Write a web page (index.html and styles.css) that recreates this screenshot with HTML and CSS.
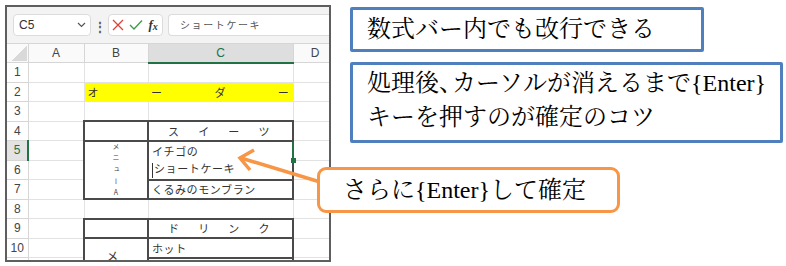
FILE: index.html
```html
<!DOCTYPE html>
<html>
  <head>
    <meta charset="UTF-8">
    <title>数式バー内の改行</title>
    <link rel="stylesheet" href="styles.css">
  </head>
  <body>
  <div class="page">
    <div class="sheet">
      <div class="fbar">
        <div class="namebox">
          <span>C5</span>
          <svg width="9" height="6" viewBox="0 0 9 6"><path d="M1 1 L4.5 4.5 L8 1" fill="none" stroke="#555" stroke-width="1.2"/></svg>
        </div>
        <div class="dots">⋮</div>
        <div class="fbtns">
          <span class="fbtn"><svg width="12" height="12" viewBox="0 0 12 12"><path d="M1 1 L11 11 M11 1 L1 11" stroke="#e0403a" stroke-width="1.3"/></svg></span>
          <span class="fbtn"><svg width="14" height="12" viewBox="0 0 14 12"><path d="M1 6 L5 10 L13 1.5" fill="none" stroke="#3d9a4d" stroke-width="1.3"/></svg></span>
          <span class="fbtn fx"><i>f</i><i class="x">x</i></span>
        </div>
        <div class="finput">ショートケーキ</div>
      </div>
      <table class="grid">
        <colgroup>
          <col class="c-hd"><col class="c-a"><col class="c-b"><col class="c-c"><col class="c-d">
        </colgroup>
        <tr class="hrow">
          <th class="corner"></th><th>A</th><th>B</th><th class="sel">C</th><th>D</th>
        </tr>
        <tr><th class="rh">1</th><td></td><td></td><td></td><td></td></tr>
        <tr><th class="rh">2</th><td></td>
          <td colspan="2" class="yellow"><div class="spread wide"><span>オ</span><span>ー</span><span>ダ</span><span>ー</span></div></td>
          <td></td></tr>
        <tr><th class="rh">3</th><td></td><td></td><td></td><td></td></tr>
        <tr><th class="rh">4</th><td></td><td class="bx"></td>
          <td class="bx"><div class="spread"><span>ス</span><span>イ</span><span>ー</span><span>ツ</span></div></td>
          <td></td></tr>
        <tr><th class="rh act">5</th><td></td>
          <td class="bx" rowspan="3"><div class="vtext"><span>メ</span><span>ニ</span><span>ュ</span><span>ー</span><span>A</span></div></td>
          <td class="edit">イチゴの<span class="handle"></span></td>
          <td></td></tr>
        <tr><th class="rh">6</th><td></td><td class="bx cont"><span class="caret"></span>ショートケーキ</td><td></td></tr>
        <tr><th class="rh">7</th><td></td><td class="bx">くるみのモンブラン</td><td></td></tr>
        <tr><th class="rh">8</th><td></td><td></td><td></td><td></td></tr>
        <tr><th class="rh">9</th><td></td><td class="bx"></td>
          <td class="bx"><div class="spread"><span>ド</span><span>リ</span><span>ン</span><span>ク</span></div></td>
          <td></td></tr>
        <tr><th class="rh">10</th><td></td>
          <td class="bx low" rowspan="2">メ</td>
          <td class="bx">ホット</td>
          <td></td></tr>
        <tr><th class="rh">11</th><td></td><td class="bx"></td><td></td></tr>
      </table>
    </div>

    <div class="notes">
      <div class="note note-one">数式バー内でも改行できる</div>
      <div class="note note-two">処理後<span class="half">、</span>カーソルが消えるまで{Enter}<br>キーを押すのが確定のコツ</div>
    </div>

    <svg class="arrow" width="786" height="266" viewBox="0 0 786 266">
      <path d="M330 185 L241 158" stroke="#f79646" stroke-width="3.5" fill="none"/>
      <path d="M254 150 L240 158 L250 170" stroke="#f79646" stroke-width="3.5" fill="none"/>
    </svg>
    <div class="callout">さらに{Enter}して確定</div>
  </div>
  </body>
</html>
```

FILE: styles.css
```css
* { box-sizing: border-box; }

body {
    margin: 0;
    background: #fff;
    font-family: "Noto Sans CJK JP", "Noto Sans", sans-serif;
}

.page {
    position: relative;
    width: 786px;
    height: 266px;
    display: flex;
    align-items: flex-start;
    overflow: hidden;
}

/* spreadsheet screenshot */
.sheet {
    margin: 5px 0 0 5px;
    width: 326px;
    height: 257px;
    flex: none;
    border: 2px solid #5e5e5e;
    overflow: hidden;
    background: #fff;
}

.fbar {
    height: 36px;
    background: #f3f3f3;
    display: flex;
    align-items: center;
    padding-left: 6px;
}

.namebox {
    width: 78px;
    height: 22px;
    background: #fff;
    border: 1px solid #dcdcdc;
    border-radius: 4px;
    display: flex;
    align-items: center;
    justify-content: space-between;
    padding: 0 4px 0 5px;
    font-family: "Liberation Sans", sans-serif;
    font-size: 12px;
    color: #333;
}

.dots {
    width: 17px;
    text-align: center;
    font-size: 12px;
    color: #555;
    font-weight: bold;
}

.fbtns {
    width: 55px;
    height: 22px;
    background: #fff;
    border: 1px solid #dcdcdc;
    border-radius: 4px;
    display: flex;
    align-items: center;
}

.fbtn {
    width: 18px;
    display: flex;
    justify-content: center;
    align-items: center;
}

.fx {
    font-family: "Liberation Serif", serif;
    font-size: 13px;
    font-weight: bold;
    color: #333;
}
.fx .x { font-size: 10px; margin-top: 3px; }

.finput {
    flex: 1;
    height: 22px;
    margin-left: 5px;
    background: #fff;
    border: 1px solid #dcdcdc;
    border-right: none;
    border-radius: 4px 0 0 4px;
    padding-left: 11px;
    font-size: 10px;
    line-height: 20px;
    letter-spacing: 1.6px;
    color: #555;
}

.grid {
    border-collapse: collapse;
    table-layout: fixed;
    width: 330px;
    font-size: 11px;
    color: #333;
}

.c-hd { width: 21px; }
.c-a  { width: 56px; }
.c-b  { width: 64px; }
.c-c  { width: 145px; }
.c-d  { width: 44px; }

.grid tr { height: 19.5px; }
.grid tr.hrow { height: 19px; }

.grid td {
    border: 1px solid #e2e2e2;
    padding: 0 3px;
    line-height: 14px;
    white-space: nowrap;
    letter-spacing: 0.6px;
    vertical-align: middle;
}

.grid th {
    border: 1px solid #d6d6d6;
    background: #fafafa;
    font-family: "Liberation Sans", sans-serif;
    font-weight: normal;
    font-size: 12px;
    color: #444;
    padding: 0;
}

.grid th.sel {
    background: #dedede;
    color: #217346;
    border-bottom: 2px solid #217346;
}

.grid th.corner {
    border-left: none;
    background: #fafafa linear-gradient(to top left, #d9d9d9 50%, transparent 50%) no-repeat;
    background-size: 16px 15px;
    background-position: right 1px bottom 1px;
}

.grid th.rh { border-left: none; background: #fff; }
.grid th.act {
    background: #e3e3e3;
    color: #217346;
    border-right: 2px solid #217346;
}

.yellow { background: #ffff00; }

.spread {
    display: flex;
    justify-content: space-between;
    padding: 0 19px 0 16px;
}
.spread.wide { padding: 0; }

.grid td.bx { border: 2px solid #4a4a4a; }

.grid td.edit {
    position: relative;
    border-top: 2px solid #4a4a4a;
    border-left: 2px solid #217346;
    border-right: 2px solid #217346;
    border-bottom: hidden;
}

.handle {
    position: absolute;
    right: -4px;
    bottom: -3px;
    width: 5px;
    height: 5px;
    background: #217346;
}

.caret {
    display: inline-block;
    width: 1px;
    height: 15px;
    background: #333;
    vertical-align: middle;
    margin-right: 1px;
}

.vtext {
    height: 54px;
    display: flex;
    flex-direction: column;
    justify-content: space-between;
    align-items: center;
    font-size: 7px;
    line-height: 8px;
    color: #444;
}
.vtext span { writing-mode: vertical-rl; text-orientation: upright; }

.grid td.low {
    text-align: center;
    vertical-align: top;
    padding-top: 10px;
    padding-right: 10px;
    font-size: 12px;
}

/* callouts */
.notes {
    margin: 7px 0 0 19px;
    display: flex;
    flex-direction: column;
    gap: 10px;
}

.note {
    border: 3px solid #4f7fbd;
    border-radius: 2px;
    font-family: "Liberation Serif", "Noto Serif CJK JP", "Noto Sans CJK JP", serif;
    font-size: 24px;
    color: #000;
    padding-left: 14px;
    white-space: nowrap;
}

.note .half { margin-right: -11px; }

.note-one {
    width: 354px;
    height: 45px;
    line-height: 39px;
}

.note-two {
    width: 433px;
    height: 81px;
    line-height: 34px;
    padding-top: 1px;
}

.arrow {
    position: absolute;
    left: 0;
    top: 0;
}

.callout {
    position: absolute;
    left: 317px;
    top: 167px;
    width: 303px;
    height: 46px;
    border: 3px solid #f79646;
    border-radius: 9px;
    background: #fff;
    font-family: "Liberation Serif", "Noto Serif CJK JP", "Noto Sans CJK JP", serif;
    font-size: 24px;
    line-height: 40px;
    padding-left: 23px;
    white-space: nowrap;
}
```
